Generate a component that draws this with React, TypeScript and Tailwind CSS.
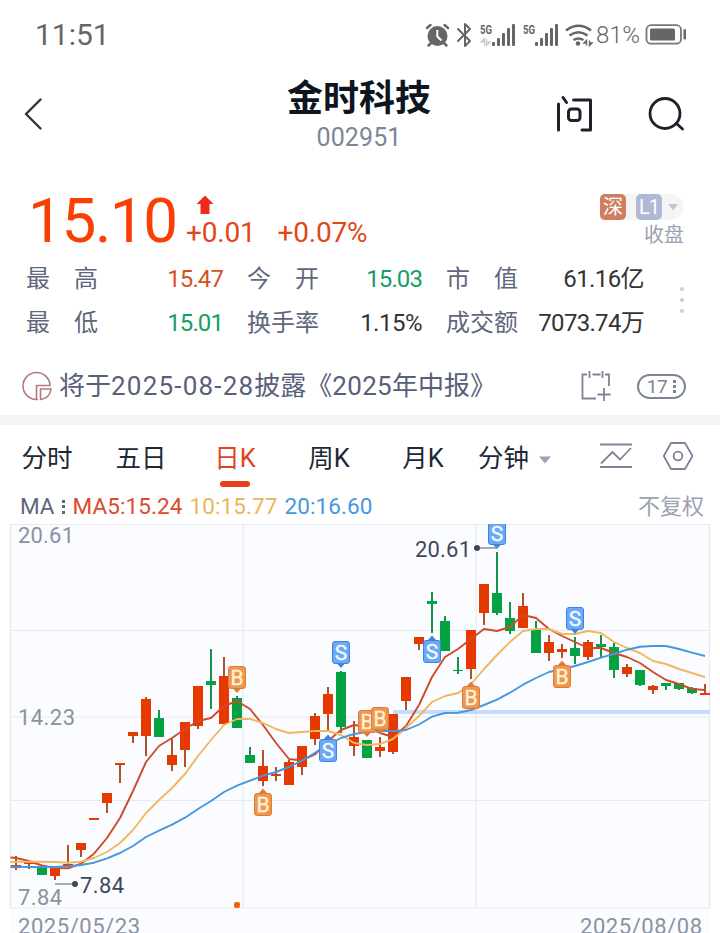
import { useState } from 'react';
import { clsx } from 'clsx';

// y of body top, body bottom, wick top, wick bottom, then 1 for a rising day
type Candle = [top: number, bottom: number, high: number, low: number, up: 0 | 1];

const candles: Candle[] = [
  [865, 868, 856, 870, 1],
  [862, 864, 861, 869, 1],
  [867, 875, 867, 875, 0],
  [868, 876, 868, 880, 1],
  [864, 867, 845, 867, 1],
  [843, 850, 843, 857, 1],
  [818, 820, 818, 820, 1],
  [793, 803, 793, 813, 1],
  [763, 765, 763, 783, 1],
  [732, 736, 732, 743, 1],
  [699, 736, 697, 756, 1],
  [718, 737, 710, 737, 0],
  [755, 765, 739, 771, 1],
  [722, 750, 722, 767, 1],
  [686, 726, 686, 729, 1],
  [681, 685, 649, 709, 0],
  [676, 724, 657, 724, 1],
  [698, 728, 696, 728, 0],
  [755, 763, 747, 763, 0],
  [766, 781, 750, 786, 1],
  [774, 776, 767, 781, 1],
  [762, 785, 760, 785, 1],
  [746, 767, 746, 775, 1],
  [716, 739, 713, 745, 1],
  [694, 714, 687, 731, 1],
  [672, 727, 671, 733, 0],
  [737, 746, 721, 756, 1],
  [740, 758, 740, 758, 0],
  [747, 751, 737, 757, 1],
  [714, 752, 714, 754, 1],
  [677, 701, 677, 710, 1],
  [637, 644, 637, 650, 1],
  [601, 604, 592, 633, 0],
  [621, 651, 616, 651, 0],
  [670, 671, 657, 674, 0],
  [630, 669, 630, 679, 1],
  [584, 613, 584, 625, 1],
  [593, 613, 552, 615, 0],
  [618, 631, 602, 634, 0],
  [606, 628, 593, 628, 1],
  [630, 653, 621, 653, 0],
  [642, 653, 635, 661, 1],
  [649, 652, 644, 658, 1],
  [648, 656, 637, 664, 0],
  [642, 657, 640, 660, 1],
  [644, 647, 635, 657, 0],
  [647, 670, 643, 678, 0],
  [667, 674, 664, 677, 1],
  [670, 685, 670, 686, 0],
  [686, 690, 685, 694, 1],
  [683, 686, 683, 690, 0],
  [683, 689, 683, 690, 0],
  [688, 693, 687, 694, 0],
  [693, 695, 684, 695, 1],
];

const ma5 = [
  858, 861, 865.5, 868, 868.3, 863.7, 853.7, 838, 818, 791, 762, 746, 738, 729, 721, 718, 706, 701,
  709, 725, 743, 759, 760.5, 754.5, 741, 730, 725, 727, 733, 737, 726, 705, 677, 657, 649, 639, 629,
  631, 627, 615, 618, 629, 636, 642, 648, 648, 653, 657, 663, 672, 680, 684, 689, 690,
];
const ma10 = [
  861.8, 861.7, 861.7, 862, 862.7, 861.7, 858, 852, 843, 830, 813, 800, 788, 774, 756, 740, 725, 719,
  719, 723, 729, 733, 732, 731, 731, 735, 743, 745, 744, 739, 728, 716, 702, 696, 693, 684, 669,
  655, 642, 631, 629, 629, 634, 634, 631, 633, 642, 648, 653, 661, 664, 669, 673, 677,
];
const ma20 = [
  866.7, 867, 867, 867, 866.3, 865, 862.7, 858.3, 853, 846, 837, 830.7, 824.7, 817.7, 809, 801, 792,
  785.7, 780.7, 775.7, 772, 767, 760.7, 752.7, 744.7, 738, 734, 732, 731, 731, 730, 724.5, 716.7, 713,
  712.7, 710, 705, 699.7, 692.7, 684.7, 678, 672, 669, 666, 662, 657.7, 654, 649.7, 646.7, 646, 646,
  649, 652.7, 656,
];

const marks: { kind: 'B' | 'S'; x: number; y: number; below?: boolean }[] = [
  { kind: 'B', x: 237, y: 666 },
  { kind: 'B', x: 263, y: 793, below: true },
  { kind: 'S', x: 328, y: 739, below: true },
  { kind: 'S', x: 341, y: 641 },
  { kind: 'B', x: 367, y: 710 },
  { kind: 'B', x: 380, y: 707 },
  { kind: 'S', x: 432, y: 640, below: true },
  { kind: 'B', x: 471, y: 686, below: true },
  { kind: 'S', x: 497, y: 522 },
  { kind: 'B', x: 562, y: 665, below: true },
  { kind: 'S', x: 575, y: 607 },
];

const xAt = (i: number) => 16 + i * 13;

const linePath = (ys: number[], startY: number) =>
  `M10.5 ${startY} ` + ys.map((y, i) => `L${xAt(i)} ${y}`).join(' ');

function StatusBar() {
  return (
    <div className="flex h-[69px] items-center justify-between pl-[35px] pr-[33px] text-[#666]">
      <span className="text-[30px] leading-none">11:51</span>
      <div className="flex items-center">
        <svg width="172" height="28" viewBox="424 20 172 28" fill="none">
          {/* alarm */}
          <circle cx="437.500" cy="35" r="10" fill="#666" />
          <path d="M427 27l3.500-3M448 27l-3.500-3M431 42l-2.500 2.500M444 42l2.500 2.500" stroke="#666" strokeWidth="2.500" strokeLinecap="round" />
          <path d="M437.300 29v6.500l4.200 4" stroke="#fff" strokeWidth="2" />
          {/* bluetooth */}
          <path d="M458 28l12 12-5 5V23l5 5-12 12" stroke="#666" strokeWidth="2" strokeLinejoin="round" strokeLinecap="round" />
          {/* signal bars */}
          {[492, 535].map((x) => (
            <g key={x} fill="#666">
              <text x={x - 12} y="33" fontSize="13" fontWeight="700" textLength="12" lengthAdjust="spacingAndGlyphs">5G</text>
              <rect x={x} y="41" width="3" height="4" rx="1" />
              <rect x={x + 5} y="37" width="3" height="8" rx="1" />
              <rect x={x + 10} y="32" width="3" height="13" rx="1" />
              <rect x={x + 15} y="27" width="3" height="18" rx="1" />
              <rect x={x + 20} y="23" width="3" height="22" rx="1" />
            </g>
          ))}
          <path d="M484.500 44.500v-7l-3.500 3.500h3M486.500 38v6.500l3.500-3.500h-3" stroke="#c9c9c9" strokeWidth="1.300" />
          {/* wifi */}
          <g stroke="#666" strokeWidth="2.600">
            <path d="M566 29.500q12.500-9.500 25 0" />
            <path d="M569.500 34.500q9-6.500 18 0" />
            <path d="M573.500 39q5-3 10 0" />
          </g>
          <circle cx="578" cy="42.500" r="2.300" fill="#666" />
          <path d="M586.500 44.500v-5l-2.500 2.500h2.500M589.500 39.500v5l2.500-2.500h-2.500" stroke="#666" strokeWidth="1.400" />
        </svg>
        <span className="text-[24px] font-light leading-none tracking-[-0.1px]">81%</span>
        <svg className="ml-[5px]" width="42" height="22" viewBox="644 24 42 22" fill="none">
          <rect x="645.500" y="25.200" width="34.500" height="18.500" rx="4.500" stroke="#777" strokeWidth="1.800" />
          <rect x="649" y="28.500" width="25" height="12" rx="1.500" fill="#666" />
          <rect x="682.500" y="29" width="2.500" height="10.500" rx="1.200" fill="#666" />
        </svg>
      </div>
    </div>
  );
}

function Header() {
  return (
    <header className="grid h-[101px] grid-cols-[1fr_auto_1fr] items-start pl-6 pr-[35px]">
      <svg className="mt-[29px]" width="18" height="32" viewBox="0 0 18 32" fill="none">
        <path d="M16.500 1.500L2 16l14.500 14.500" stroke="#333" strokeWidth="2.400" strokeLinecap="round" strokeLinejoin="round" />
      </svg>
      <div className="ml-[9px] flex flex-col items-center pt-[10px]">
        <h1 className="text-[36px] font-bold leading-[40px] text-[#0e1420]">金时科技</h1>
        <span className="mt-[5px] text-[25px] leading-[28px] tracking-[0.1px] text-[#7d8698]">002951</span>
      </div>
      <div className="mt-[26px] flex justify-end gap-[56px]">
        <svg width="36" height="38" viewBox="0 0 36 38" fill="none" stroke="#1d2129" strokeWidth="3" strokeLinecap="round" strokeLinejoin="round">
          <path d="M2.500 9v26M7 2.500l3.500 5M17.500 5h17v30h-8.500" />
          <rect x="12.500" y="14" width="11.500" height="11.500" rx="3" />
        </svg>
        <svg width="37" height="38" viewBox="0 0 37 38" fill="none" stroke="#1d2129" strokeWidth="2.800" strokeLinecap="round">
          <circle cx="17" cy="18.500" r="15" />
          <path d="M28.500 28.500l6 5.500" />
        </svg>
      </div>
    </header>
  );
}

function Quote() {
  return (
    <section className="h-[187px] pl-[26px]">
      <div className="flex h-[86px] items-start">
        <span className="ml-[2px] mt-[19px] w-[150px] text-[62px] leading-[64px] tracking-[-1.4px] text-[#fa3f05]">15.10</span>
        <div className="ml-[8px] flex flex-col pt-[25px]">
          <svg className="ml-[10px]" width="18" height="20" viewBox="0 0 18 20">
            <path d="M9 0.500L17.500 9h-4v10h-9V9h-4z" fill="#f02a18" />
          </svg>
          <div className="mt-[2px] flex gap-[22px] text-[28px] leading-[32px] tracking-[-0.2px] text-[#e0481a]">
            <span>+0.01</span>
            <span>+0.07%</span>
          </div>
        </div>
        <div className="ml-auto mr-[36px] flex flex-col items-end pt-[24px]">
          <div className="flex items-center rounded-r-full bg-[#f5f5f8]">
            <span className="flex size-[26px] items-center justify-center rounded-[5px] bg-[#cf7f5f] text-[20px] leading-none text-white">深</span>
            <span className="ml-[10px] flex size-[26px] items-center justify-center rounded-[5px] bg-[#b1b8d3] text-[20px] leading-none tracking-[-1px] text-white">L1</span>
            <svg className="ml-[6px] mr-[6px]" width="10" height="7" viewBox="0 0 10 7">
              <path d="M0 0h10L5 6.500z" fill="#c3c6ce" />
            </svg>
          </div>
          <span className="mt-[4px] text-[20px] leading-[22px] text-[#9aa2b3]">收盘</span>
        </div>
      </div>
      <div className="flex">
        <dl className="grid grid-cols-[72px_125px_96px_103px_96px_126px] gap-y-[20px] pt-[11px] text-[24px] leading-[24px] text-[#5f677c]">
          <dt className="flex justify-between"><i className="not-italic">最</i><i className="not-italic">高</i></dt>
          <dd className="text-right tracking-[-0.9px] text-[#d9501f]">15.47</dd>
          <dt className="flex justify-between pl-[24px]"><i className="not-italic">今</i><i className="not-italic">开</i></dt>
          <dd className="text-right tracking-[-0.9px] text-[#14a065]">15.03</dd>
          <dt className="flex justify-between pl-[24px]"><i className="not-italic">市</i><i className="not-italic">值</i></dt>
          <dd className="text-right tracking-[-0.6px] text-[#333]">61.16亿</dd>
          <dt className="flex justify-between"><i className="not-italic">最</i><i className="not-italic">低</i></dt>
          <dd className="text-right tracking-[-0.9px] text-[#14a065]">15.01</dd>
          <dt className="pl-[24px]">换手率</dt>
          <dd className="text-right tracking-[-0.5px] text-[#333]">1.15%</dd>
          <dt className="pl-[24px]">成交额</dt>
          <dd className="whitespace-nowrap text-right tracking-[-0.7px] text-[#333]">7073.74万</dd>
        </dl>
        <div className="ml-[36px] flex flex-col justify-center gap-[7px] pt-[9px]">
          <i className="size-[4px] rounded-full bg-[#c9ced8]" />
          <i className="size-[4px] rounded-full bg-[#c9ced8]" />
          <i className="size-[4px] rounded-full bg-[#c9ced8]" />
        </div>
      </div>
    </section>
  );
}

function Notice() {
  return (
    <section className="flex h-[58px] items-center pl-[22px] pr-[34px] text-[#57607a]">
      <svg width="31" height="30" viewBox="0 0 31 30" fill="none" stroke="#b47b7b" strokeWidth="1.600">
        <path d="M16 28.500H14.500A13.500 13.500 0 1 1 28 14.500H14.500V28" />
        <path d="M18.500 18H29Q28 27 18.500 28.500z" />
      </svg>
      <p className="ml-[6px] whitespace-nowrap text-[26px] leading-none">
        将于<span className="tracking-[1.2px]">2025-08-28</span>披露《<span className="tracking-[0.3px]">2025</span>年中报》
      </p>
      <svg className="ml-auto" width="30" height="31" viewBox="0 0 30 31" fill="none" stroke="#7c8497" strokeWidth="1.800">
        <path d="M6 3.500H1.500v24H15M24 3.500h4V15M11.500 3.500h8M8.500 0v7M21.500 0v7M23 17v13M16.500 23.500h13" />
      </svg>
      <div className="ml-[26px] flex h-[25px] w-[49px] items-center justify-center gap-[6px] rounded-full border-2 border-[#7c8497] text-[19px] leading-none tracking-[-0.5px] text-[#7c8497]">
        17
        <span className="flex flex-col gap-[2px]">
          <i className="size-[3px] bg-[#7c8497]" />
          <i className="size-[3px] bg-[#7c8497]" />
          <i className="size-[3px] bg-[#7c8497]" />
        </span>
      </div>
    </section>
  );
}

const tabs = ['分时', '五日', '日K', '周K', '月K'];

function PeriodTabs() {
  const [active, setActive] = useState('日K');

  return (
    <nav className="flex h-[64px] items-start pr-[27px] text-[25.5px] text-[#202838]">
      {tabs.map((tab) => (
        <button
          key={tab}
          onClick={() => setActive(tab)}
          className={clsx('flex w-[94px] flex-col items-center pt-[18px]', active === tab && 'text-[#e0441c]')}
        >
          <span className="leading-[30px]">{tab}</span>
          {active === tab && <span className="mt-[8px] h-[6px] w-[30px] rounded-full bg-[#e6401a]" />}
        </button>
      ))}
      <button className="ml-[8px] flex items-center gap-[10px] pt-[18px] leading-[30px]">
        分钟
        <svg className="mt-[3px]" width="12" height="8" viewBox="0 0 12 8">
          <path d="M0 0.500h12L6 7.500z" fill="#9ba2b5" />
        </svg>
      </button>
      <svg className="ml-auto mt-[18px]" width="32" height="26" viewBox="0 0 32 26" fill="none" stroke="#7d8496" strokeWidth="1.800">
        <path d="M0 1.500h32M0 24h32M1 20.500L12.500 9l7.500 7.500L31 5" />
      </svg>
      <svg className="ml-[31px] mt-[17px]" width="30" height="28" viewBox="0 0 30 28" fill="none" stroke="#7d8496" strokeWidth="1.800" strokeLinejoin="round">
        <path d="M8 1h14l7.500 13L22 27H8L0.800 14z" />
        <circle cx="15" cy="14" r="4.300" />
      </svg>
    </nav>
  );
}

function Indicators() {
  return (
    <div className="flex h-[35px] items-center pl-[20px] pr-[16px] text-[22.5px] leading-none">
      <span className="text-[#5f677c]">MA</span>
      <span className="ml-[7px] mr-[8px] flex flex-col gap-[2.500px]">
        <i className="size-[3px] bg-[#5f677c]" />
        <i className="size-[3px] bg-[#5f677c]" />
        <i className="size-[3px] bg-[#5f677c]" />
      </span>
      <span className="w-[117px] tracking-[0.1px] text-[#db4a2b]">MA5:15.24</span>
      <span className="w-[95px] tracking-[0.1px] text-[#ecb55c]">10:15.77</span>
      <span className="tracking-[0.1px] text-[#4697e0]">20:16.60</span>
      <span className="ml-auto text-[22px] text-[#9aa1b1]">不复权</span>
    </div>
  );
}

function Mark({ kind, x, y, below }: { kind: 'B' | 'S'; x: number; y: number; below?: boolean }) {
  const fill = kind === 'B' ? '#f0964f' : '#6ba8f5';
  const stroke = kind === 'B' ? '#e07c35' : '#3f83e0';
  const tip = below ? `M${x - 4} ${y}l4-4.500 4 4.500z` : `M${x - 4} ${y + 22.5}l4 4.500 4-4.500z`;
  return (
    <g>
      <path d={tip} fill={stroke} />
      <rect x={x - 8.5} y={y + 0.5} width="17" height="22" rx="2.500" fill={fill} stroke={stroke} />
      <text x={x} y={y + 18.5} textAnchor="middle" fontSize="21" fill={kind === 'B' ? '#fff3d6' : '#f2faff'} stroke={kind === 'B' ? '#fff3d6' : '#f2faff'} strokeWidth="0.400">
        {kind}
      </text>
    </g>
  );
}

function KLineChart() {
  return (
    <svg className="block" width="720" height="409" viewBox="0 524 720 409" fontSize="22">
      <rect x="10" y="524" width="700" height="409" fill="#fbfcff" />
      <g stroke="#e7eaf0" strokeWidth="1.200">
        <path d="M10 524.500H710M10 630.500H710M10 717H710M10 800.500H710M10 908H710" />
        <path d="M10.500 524V908M243 524V908M476 524V908M709.500 524V908" />
      </g>
      <rect x="393" y="710" width="317" height="4" fill="#c4dcfa" />

      <g fill="#8b91a1">
        <text x="18" y="543" textLength="56">20.61</text>
        <text x="18" y="725" textLength="57">14.23</text>
        <text x="18" y="905" textLength="44">7.84</text>
        <text x="18" y="934" textLength="122">2025/05/23</text>
        <text x="580" y="934" textLength="122">2025/08/08</text>
      </g>

      {candles.map(([top, bottom, high, low, up], i) => (
        <g key={i} fill={up ? '#e63900' : '#04a240'}>
          <rect x={xAt(i) - 1} y={high} width="2" height={low - high} fill={up ? '#b0512a' : '#12954a'} />
          <rect x={xAt(i) - 5} y={top} width="10" height={bottom - top} />
        </g>
      ))}

      <g fill="none" strokeWidth="1.900" strokeLinejoin="round">
        <path d={linePath(ma5, 857.5)} stroke="#d04a2a" />
        <path d={linePath(ma10, 862)} stroke="#efb85f" />
        <path d={linePath(ma20, 866.7)} stroke="#4697dd" />
      </g>

      {marks.map((m) => (
        <Mark key={`${m.x}-${m.y}`} {...m} />
      ))}

      {/* extremes */}
      <g fill="#3f4757">
        <path d="M55 884h20M477 548h20" stroke="#8b91a1" strokeWidth="1.500" />
        <circle cx="75" cy="884" r="3" />
        <text x="80" y="892.500" textLength="44">7.84</text>
        <circle cx="477" cy="548" r="3" />
        <text x="415" y="556.500" textLength="56">20.61</text>
      </g>
      <rect x="234" y="902" width="6" height="6" rx="2" fill="#f06010" />
    </svg>
  );
}

export default function App() {
  return (
    <div className="h-[933px] w-[720px] overflow-hidden bg-white font-[Roboto,'Noto_Sans_CJK_SC',sans-serif]">
      <StatusBar />
      <Header />
      <Quote />
      <Notice />
      <div className="h-[10px] bg-[#f4f5f8]" />
      <PeriodTabs />
      <Indicators />
      <KLineChart />
    </div>
  );
}
